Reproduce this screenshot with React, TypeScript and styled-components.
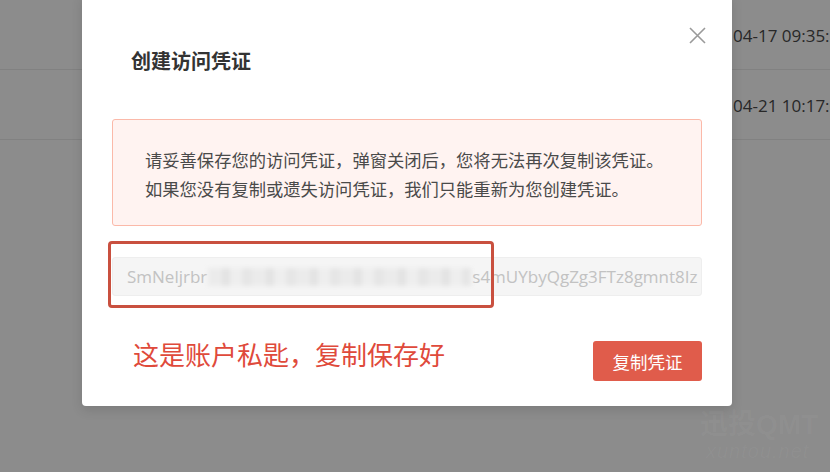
import React from "react";
import styled, { createGlobalStyle } from "styled-components";

const Global = createGlobalStyle`
  html, body { margin: 0; padding: 0; background: #fff; }
  body { font-family: "Open Sans", "Noto Sans CJK SC", sans-serif; overflow: hidden; }
  * { box-sizing: border-box; }
`;

const Page = styled.div`
  position: relative;
  width: 830px;
  height: 472px;
  overflow: hidden;
  background: #fff;
`;

const Table = styled.div`
  display: flex;
  flex-direction: column;
`;

const Row = styled.div`
  display: grid;
  grid-template-columns: 733px 1fr;
  align-items: center;
  height: 70px;
  border-bottom: 1px solid #ebebeb;
`;

const DateCell = styled.div`
  grid-column: 2;
  white-space: nowrap;
  font-size: 17px;
  color: #4a4a4a;
  padding-top: 1px;
`;

const Overlay = styled.div`
  position: absolute;
  inset: 0;
  background: rgba(0, 0, 0, 0.45);
`;

const Watermark = styled.div`
  position: absolute;
  left: 700px;
  top: 410px;
  display: flex;
  flex-direction: column;
  color: rgba(255, 255, 255, 0.035);
  font-family: "Liberation Sans", "Noto Sans CJK SC", sans-serif;
`;

const WmBig = styled.span`
  font-size: 28px;
  font-weight: 700;
  line-height: 30px;
`;

const WmSmall = styled.span`
  font-size: 20px;
  font-style: italic;
  line-height: 22px;
  padding-left: 6px;
  letter-spacing: 1px;
`;

const Modal = styled.div`
  position: absolute;
  left: 82px;
  top: -6px;
  width: 650px;
  background: #fff;
  border-radius: 4px;
  box-shadow: 0 4px 12px rgba(0, 0, 0, 0.12);
  display: flex;
  flex-direction: column;
  padding: 0 30px 25px;
`;

const Header = styled.div`
  display: flex;
  align-items: center;
  height: 125px;
  padding: 7px 0 0 19px;
`;

const Title = styled.h2`
  margin: 0;
  font-size: 20px;
  font-weight: 700;
  color: #333;
  font-family: "Noto Sans CJK SC", sans-serif;
`;

const CloseButton = styled.button`
  position: absolute;
  right: 26px;
  top: 32px;
  width: 18px;
  height: 18px;
  padding: 0;
  border: none;
  background: transparent;
  display: flex;
  align-items: center;
  justify-content: center;
`;

const Alert = styled.div`
  border: 1px solid #fbb9a9;
  background: #fff3f1;
  border-radius: 3px;
  padding: 25px 20px 22px 32px;
  font-family: "Noto Sans CJK SC", sans-serif;
  font-size: 17.3px;
  line-height: 29px;
  color: #4a4a4a;
`;

const AlertLine = styled.div`
  white-space: nowrap;
`;

const InputWrap = styled.div`
  position: relative;
  margin-top: 31px;
`;

const KeyField = styled.div`
  height: 39px;
  border: 1px solid #eee;
  background: #f5f5f5;
  border-radius: 3px;
  padding: 0 14px;
  display: flex;
  align-items: center;
  overflow: hidden;
  white-space: nowrap;
  font-size: 17px;
  color: #c2c2c2;
`;

const Blurred = styled.span`
  display: inline-block;
  flex: none;
  width: 263px;
  height: 18px;
  margin: 0 1px;
  background:
    repeating-linear-gradient(90deg, #ebebeb 0 14px, #e3e3e3 14px 22px, #eeeeee 22px 34px, #e6e6e6 34px 44px);
  filter: blur(2px);
`;

const Highlight = styled.div`
  position: absolute;
  left: -4px;
  top: -16px;
  width: 386px;
  height: 67px;
  border: 3.5px solid #c9503f;
  border-radius: 4px;
  pointer-events: none;
`;

const Footer = styled.div`
  display: flex;
  align-items: center;
  justify-content: space-between;
  margin-top: 45px;
`;

const Note = styled.div`
  font-family: "Noto Sans CJK SC", sans-serif;
  font-size: 26px;
  color: #df4a3b;
  padding-left: 21px;
  margin-top: -16px;
  white-space: nowrap;
`;

const PrimaryButton = styled.button`
  width: 109px;
  height: 40px;
  border: none;
  border-radius: 3px;
  background: #e05c4b;
  color: #fff;
  font-family: "Noto Sans CJK SC", sans-serif;
  font-size: 17.5px;
  padding: 0;
`;

export default function App() {
  return (
    <Page>
      <Global />
      <Table>
        <Row>
          <DateCell>04-17 09:35:21</DateCell>
        </Row>
        <Row>
          <DateCell>04-21 10:17:08</DateCell>
        </Row>
      </Table>
      <Overlay />
      <Watermark>
        <WmBig>迅投QMT</WmBig>
        <WmSmall>xuntou.net</WmSmall>
      </Watermark>
      <Modal>
        <CloseButton aria-label="关闭">
          <svg width="17" height="17" viewBox="0 0 17 17">
            <path d="M1 1L16 16M16 1L1 16" stroke="#9a9a9a" strokeWidth="1.6" fill="none" />
          </svg>
        </CloseButton>
        <Header>
          <Title>创建访问凭证</Title>
        </Header>
        <Alert>
          <AlertLine>请妥善保存您的访问凭证，弹窗关闭后，您将无法再次复制该凭证。</AlertLine>
          <AlertLine>如果您没有复制或遗失访问凭证，我们只能重新为您创建凭证。</AlertLine>
        </Alert>
        <InputWrap>
          <KeyField>
            SmNeljrbr
            <Blurred />
            s4mUYbyQgZg3FTz8gmnt8Iz
          </KeyField>
          <Highlight />
        </InputWrap>
        <Footer>
          <Note>这是账户私匙，复制保存好</Note>
          <PrimaryButton>复制凭证</PrimaryButton>
        </Footer>
      </Modal>
    </Page>
  );
}
